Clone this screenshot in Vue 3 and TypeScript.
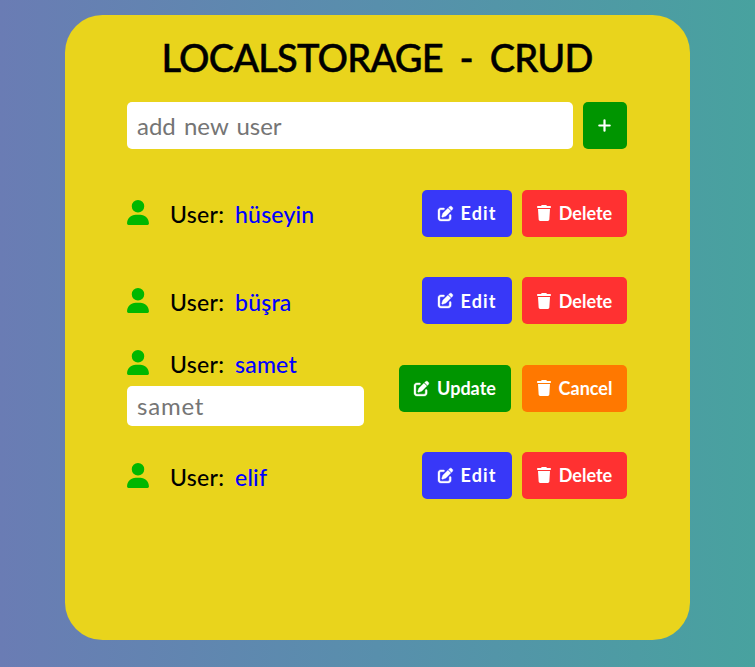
<script setup lang="ts">
import { ref } from 'vue'

interface User {
  id: number
  name: string
  editing: boolean
}

const users = ref<User[]>([
  { id: 1, name: 'hüseyin', editing: false },
  { id: 2, name: 'büşra', editing: false },
  { id: 3, name: 'samet', editing: true },
  { id: 4, name: 'elif', editing: false },
])
const newUser = ref('')
const draft = ref('')

function addUser() {
  const name = newUser.value.trim()
  if (!name) return
  users.value.push({ id: Date.now(), name, editing: false })
  newUser.value = ''
}

function updateUser(user: User) {
  user.name = draft.value.trim() || user.name
  draft.value = ''
  user.editing = false
}

function removeUser(id: number) {
  users.value = users.value.filter((u) => u.id !== id)
}
</script>

<template>
  <main class="page">
    <section class="card">
      <h1 class="title">LOCALSTORAGE - CRUD</h1>
      <form class="add" @submit.prevent="addUser">
        <input v-model="newUser" class="field add-field" placeholder="add new user" />
        <button class="btn plus" type="submit">
          <svg width="14" height="14" viewBox="0 0 14 14"><path d="M6.500 1.300v10.400M1.300 6.500h10.400" stroke="currentColor" stroke-width="2.200" stroke-linecap="round" /></svg>
        </button>
      </form>
      <ul class="list">
        <li v-for="user in users" :key="user.id" class="row">
          <div class="info" :class="{ open: user.editing }">
            <div class="who">
              <svg class="person" viewBox="0 0 448 512"><path fill="currentColor" d="M224 256A128 128 0 1 0 224 0a128 128 0 1 0 0 256zm-45.700 48C79.800 304 0 383.800 0 482.300C0 498.700 13.300 512 29.700 512H418.300c16.400 0 29.700-13.300 29.700-29.700C448 383.800 368.200 304 269.700 304H178.300z" /></svg>
              <span class="label">User:</span>
              <span class="name">{{ user.name }}</span>
            </div>
            <input v-if="user.editing" v-model="draft" class="field edit-field" :placeholder="user.name" />
          </div>
          <div class="actions" :class="{ wide: user.editing }">
            <button class="btn" :class="user.editing ? 'update' : 'edit'" @click="user.editing ? updateUser(user) : (user.editing = true)">
              <svg class="pen" viewBox="0 0 512 512"><path fill="currentColor" stroke="currentColor" stroke-width="12" d="M471.600 21.700c-21.900-21.900-57.300-21.900-79.200 0L362.300 51.700l97.900 97.900 30.100-30.100c21.900-21.900 21.900-57.300 0-79.200L471.600 21.700zm-299.200 220c-6.100 6.100-10.800 13.600-13.500 21.900l-29.600 88.800c-2.900 8.600-.6 18.100 5.800 24.600s15.900 8.700 24.600 5.800l88.800-29.600c8.200-2.700 15.700-7.400 21.900-13.500L437.700 172.300 339.700 74.300 172.400 241.700zM96 64C43 64 0 107 0 160V416c0 53 43 96 96 96H352c53 0 96-43 96-96V320c0-17.700-14.300-32-32-32s-32 14.300-32 32v96c0 17.700-14.300 32-32 32H96c-17.700 0-32-14.300-32-32V160c0-17.700 14.300-32 32-32h96c17.700 0 32-14.300 32-32s-14.300-32-32-32H96z" /></svg>
              <span>{{ user.editing ? 'Update' : 'Edit' }}</span>
            </button>
            <button class="btn" :class="user.editing ? 'cancel' : 'delete'" @click="user.editing ? (user.editing = false) : removeUser(user.id)">
              <svg class="trash" viewBox="0 0 448 512"><path fill="currentColor" d="M135.200 17.700L128 32H32C14.300 32 0 46.300 0 64S14.300 96 32 96H416c17.700 0 32-14.300 32-32s-14.300-32-32-32H320l-7.200-14.300C307.400 6.800 296.300 0 284.200 0H163.800c-12.100 0-23.200 6.800-28.600 17.700zM416 128H32L53.200 467c1.600 25.300 22.600 45 47.900 45H346.900c25.300 0 46.300-19.700 47.900-45L416 128z" /></svg>
              <span>{{ user.editing ? 'Cancel' : 'Delete' }}</span>
            </button>
          </div>
        </li>
      </ul>
    </section>
  </main>
</template>

<style>
body {
  margin: 0;
  overflow: hidden;
}
</style>

<style scoped>
* {
  box-sizing: border-box;
}
.page {
  height: 667px;
  padding: 15px 65px 27px;
  background: linear-gradient(to right, #6a7cb4, #588fac 50%, #48a29f);
  font-family: Lato, 'Open Sans', sans-serif;
}
.card {
  height: 625px;
  padding: 20px 63px 0 62px;
  border-radius: 37.5px;
  background: #e9d41c;
}
.title {
  margin: 0;
  height: 67px;
  line-height: 44px;
  text-align: center;
  white-space: nowrap;
  font-size: 38px;
  font-weight: 500;
  letter-spacing: -0.8px;
  word-spacing: 8px;
  -webkit-text-stroke: 0.5px #000;
  color: #000;
}
.add {
  display: flex;
  gap: 10px;
  height: 47px;
}
.field {
  display: block;
  min-width: 0;
  border: 0;
  border-radius: 5px;
  padding: 0 10px 1px;
  outline: none;
  background: #fff;
  font-family: inherit;
  font-size: 24px;
}
.field::placeholder {
  color: #757575;
  opacity: 1;
}
.add-field {
  flex: 1;
  word-spacing: 2px;
}
.edit-field {
  width: 237px;
  height: 40px;
  margin-top: 7px;
  letter-spacing: 0.8px;
}
.btn {
  display: flex;
  align-items: center;
  justify-content: center;
  height: 47px;
  padding: 0;
  border: 0;
  border-radius: 5px;
  color: #fff;
  font-family: inherit;
  font-size: 18px;
  font-weight: 700;
  gap: 8px;
}
.plus {
  width: 44px;
  background: #009500;
}
.list {
  list-style: none;
  margin: 20.6px 0 0;
  padding: 0;
}
.row {
  display: flex;
  align-items: center;
  justify-content: space-between;
  height: 87.4px;
}
.info {
  padding-top: 2.2px;
}
.info.open {
  padding: 0 0 2px;
}
.who {
  display: flex;
  align-items: center;
  height: 30px;
  font-size: 23px;
  color: #000;
}
.person {
  width: 22px;
  height: 25px;
  margin: 0 21px 3px 0;
  color: #00b700;
}
.label {
  width: 65px;
  font-weight: 500;
  letter-spacing: 0.3px;
}
.name {
  color: #0000ff;
  font-weight: 500;
  letter-spacing: 0.2px;
}
.actions {
  display: flex;
  gap: 10px;
}
.actions.wide {
  gap: 11px;
}
.pen {
  width: 15px;
  height: 15px;
  overflow: visible;
}
.trash {
  width: 14px;
  height: 16px;
}
.edit {
  width: 90px;
  background: #3838f8;
  letter-spacing: 1.1px;
}
.update {
  width: 112px;
  background: #009500;
}
.delete,
.cancel {
  width: 105px;
}
.delete {
  background: #ff3131;
}
.cancel {
  background: #ff7800;
}
</style>
